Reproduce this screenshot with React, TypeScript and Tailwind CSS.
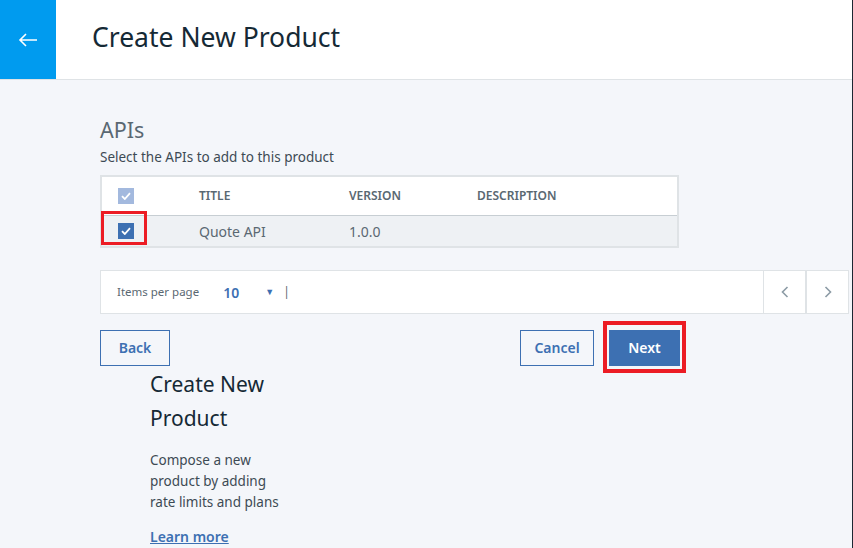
import React from "react";

const font = { fontFamily: '"Noto Sans", "Open Sans", Arial, sans-serif' };

function Check({ color }: { color: string }) {
  return (
    <span className="flex h-4 w-4 items-center justify-center" style={{ backgroundColor: color }}>
      <svg width="10" height="8" viewBox="0 0 10 8" fill="none">
        <path d="M1 4.2 L3.8 7 L9 1.2" stroke="white" strokeWidth="1.8" />
      </svg>
    </span>
  );
}

export default function App() {
  return (
    <div className="relative h-[548px] w-[853px] overflow-hidden bg-[#f4f6fa]" style={font}>
      {/* header */}
      <div className="flex h-[80px] border-b border-[#dfe3e6] bg-white">
        <div className="flex w-[56px] items-center justify-center bg-[#009bef]">
          <svg width="20" height="14" viewBox="0 0 20 14" fill="none">
            <path d="M19 7 H2 M8 1 L2 7 L8 13" stroke="white" strokeWidth="1.6" />
          </svg>
        </div>
        <div className="flex items-center pl-[36px] pb-[4px] text-[26.5px] text-[#152935]">Create New Product</div>
      </div>

      <div className="pl-[100px] pr-[4px]">
        <div className="mt-[35px] text-[21.5px] leading-[30px] text-[#5a6872]">APIs</div>
        <div className="mt-[2px] text-[13.5px] leading-[20px] text-[#3d4a54]">Select the APIs to add to this product</div>

        {/* table */}
        <div className="relative mt-[8px] w-[579px] border-2 border-[#dfe3e6] bg-white">
          <div className="flex h-[39px] items-center border-b border-[#c7ced3] text-[12px] font-semibold text-[#5a6872]">
            <div className="w-[97px] pl-[16px]">
              <Check color="#a3b9de" />
            </div>
            <div className="w-[150px]">TITLE</div>
            <div className="w-[128px]">VERSION</div>
            <div>DESCRIPTION</div>
          </div>
          <div className="flex h-[30px] items-center bg-[#eef1f4] text-[14px] text-[#5a6872]">
            <div className="w-[97px] pl-[16px]">
              <Check color="#3d70b2" />
            </div>
            <div className="w-[150px]">Quote API</div>
            <div className="w-[128px]">1.0.0</div>
          </div>
          <div className="absolute left-[-1px] top-[34px] h-[34px] w-[46px] border-[3px] border-[#ec1c24]" />
        </div>

        {/* pagination */}
        <div className="mt-[22px] flex h-[44px] items-stretch border border-[#dfe3e6] bg-white">
          <div className="flex flex-1 items-center pl-[16px]">
            <span className="text-[11.5px] text-[#5a6872]">Items per page</span>
            <span className="ml-[24px] text-[14px] font-semibold text-[#3d70b2]">10</span>
            <span className="ml-[26px] text-[9px] text-[#3d70b2]">▼</span>
            <span className="ml-[9px] text-[12px] text-[#5a6872]">|</span>
          </div>
          <div className="flex w-[42px] items-center justify-center border-l border-[#dfe3e6]">
            <svg width="8" height="12" viewBox="0 0 8 12" fill="none">
              <path d="M6.5 1 L1.5 6 L6.5 11" stroke="#8c9ba5" strokeWidth="1.6" />
            </svg>
          </div>
          <div className="flex w-[43px] items-center justify-center border-l-2 border-[#dfe3e6]">
            <svg width="8" height="12" viewBox="0 0 8 12" fill="none">
              <path d="M1.5 1 L6.5 6 L1.5 11" stroke="#8c9ba5" strokeWidth="1.6" />
            </svg>
          </div>
        </div>

        {/* buttons */}
        <div className="mt-[16px] flex w-[580px] items-center">
          <button className="flex h-[36px] w-[70px] items-center justify-center border border-[#3d70b2] pb-[2px] text-[14px] font-semibold text-[#3d70b2]">Back</button>
          <div className="flex-1" />
          <button className="flex h-[36px] w-[74px] items-center justify-center border border-[#3d70b2] pb-[2px] text-[14px] font-semibold text-[#3d70b2]">Cancel</button>
          <div className="relative ml-[15px]">
            <button className="flex h-[36px] w-[71px] items-center justify-center bg-[#3d70b2] pb-[2px] text-[14px] font-semibold text-white">Next</button>
            <div className="absolute left-[-6px] top-[-9px] h-[52px] w-[83px] border-[4px] border-[#ec1c24]" />
          </div>
        </div>

        {/* info */}
        <div className="ml-[50px] w-[138px] pt-[1px]">
          <div className="text-[21px] leading-[34px] text-[#152935]">Create New Product</div>
          <div className="mt-[15px] text-[13.5px] leading-[21px] text-[#3d4a54]">Compose a new product by adding rate limits and plans</div>
          <div className="mt-[13px] text-[14px] font-semibold text-[#3d70b2] underline">Learn more</div>
        </div>
      </div>
      <div className="absolute right-0 top-0 h-full w-[1px] bg-[#1d2733]" />
    </div>
  );
}
